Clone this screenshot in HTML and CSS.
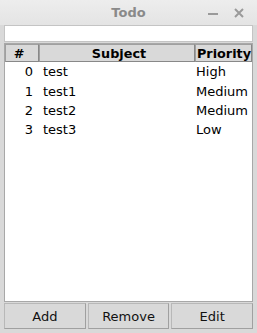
FILE: index.html
```html
<!DOCTYPE html>
<html lang="en">
<head>
    <meta charset="UTF-8">
    <meta name="viewport" content="width=device-width, initial-scale=1.0">
    <title>Todo</title>
    <link rel="stylesheet" href="styles.css">
</head>
<body>

    <div class="window">
        <!-- Title bar -->
        <div class="titlebar">
            <span class="title">Todo</span>
            <div class="controls">
                <svg width="12" height="12" viewBox="0 0 12 12"><rect x="1" y="6" width="10" height="2" fill="#9a9a9a"/></svg>
                <svg width="12" height="12" viewBox="0 0 12 12"><path d="M2 2 L10 10 M10 2 L2 10" stroke="#9a9a9a" stroke-width="2"/></svg>
            </div>
        </div>

        <div class="content">
            <input type="text" class="entry">

            <div class="table-frame">
                <div class="row header">
                    <div class="cell num">#</div>
                    <div class="cell subject">Subject</div>
                    <div class="cell priority">Priority</div>
                </div>
                <div class="row">
                    <div class="cell num">0</div>
                    <div class="cell subject">test</div>
                    <div class="cell priority">High</div>
                </div>
                <div class="row">
                    <div class="cell num">1</div>
                    <div class="cell subject">test1</div>
                    <div class="cell priority">Medium</div>
                </div>
                <div class="row">
                    <div class="cell num">2</div>
                    <div class="cell subject">test2</div>
                    <div class="cell priority">Medium</div>
                </div>
                <div class="row">
                    <div class="cell num">3</div>
                    <div class="cell subject">test3</div>
                    <div class="cell priority">Low</div>
                </div>
            </div>

            <div class="buttons">
                <button class="button">Add</button>
                <button class="button">Remove</button>
                <button class="button">Edit</button>
            </div>
        </div>
    </div>

</body>
</html>
```

FILE: styles.css
```css
body {
    margin: 0;
    font-family: "DejaVu Sans", sans-serif;
    font-size: 13px;
    background-color: #d9d9d9;
}
.window {
    width: 257px;
    height: 333px;
    display: flex;
    flex-direction: column;
    background-color: #d9d9d9;
}
.titlebar {
    height: 25px;
    flex: none;
    position: relative;
    display: flex;
    align-items: center;
    justify-content: center;
    background: linear-gradient(#ededed, #e4e4e4);
}
.title {
    font-weight: bold;
    color: #8a8a8a;
    font-size: 13px;
}
.controls {
    position: absolute;
    right: 12px;
    top: 7px;
    display: flex;
    gap: 14px;
}
.content {
    flex: 1;
    display: flex;
    flex-direction: column;
    padding: 0 4px 4px 4px;
}
.entry {
    height: 17px;
    box-sizing: border-box;
    margin: 0 0 1px 0;
    border: 1px solid #c4c4c4;
    background: white;
    padding: 0;
}
.table-frame {
    flex: 1;
    background: white;
    border: 1px solid #a8a8a8;
}
.row {
    display: flex;
    height: 19.4px;
    align-items: center;
}
.header {
    height: 18px;
    background: #d9d9d9;
    font-weight: bold;
    font-size: 12.8px;
}
.header .cell {
    height: 100%;
    box-sizing: border-box;
    display: flex;
    align-items: center;
    justify-content: center;
    border: 1px solid #a0a0a0;
    border-right-color: #888;
    border-bottom-color: #888;
}
.cell {
    box-sizing: border-box;
    white-space: nowrap;
}
.num {
    width: 34px;
    text-align: right;
    padding-right: 6px;
}
.subject {
    width: 156px;
    padding-left: 4px;
}
.priority {
    flex: 1;
    padding-left: 1px;
}
.buttons {
    display: flex;
    gap: 2px;
    margin-top: 1px;
}
.button {
    flex: 1;
    height: 26px;
    font-family: "DejaVu Sans", sans-serif;
    font-size: 13px;
    color: #111;
    background: #d9d9d9;
    border: 1px solid #b8b8b8;
    border-right-color: #a0a0a0;
    border-bottom-color: #a0a0a0;
    padding: 0;
}
```
